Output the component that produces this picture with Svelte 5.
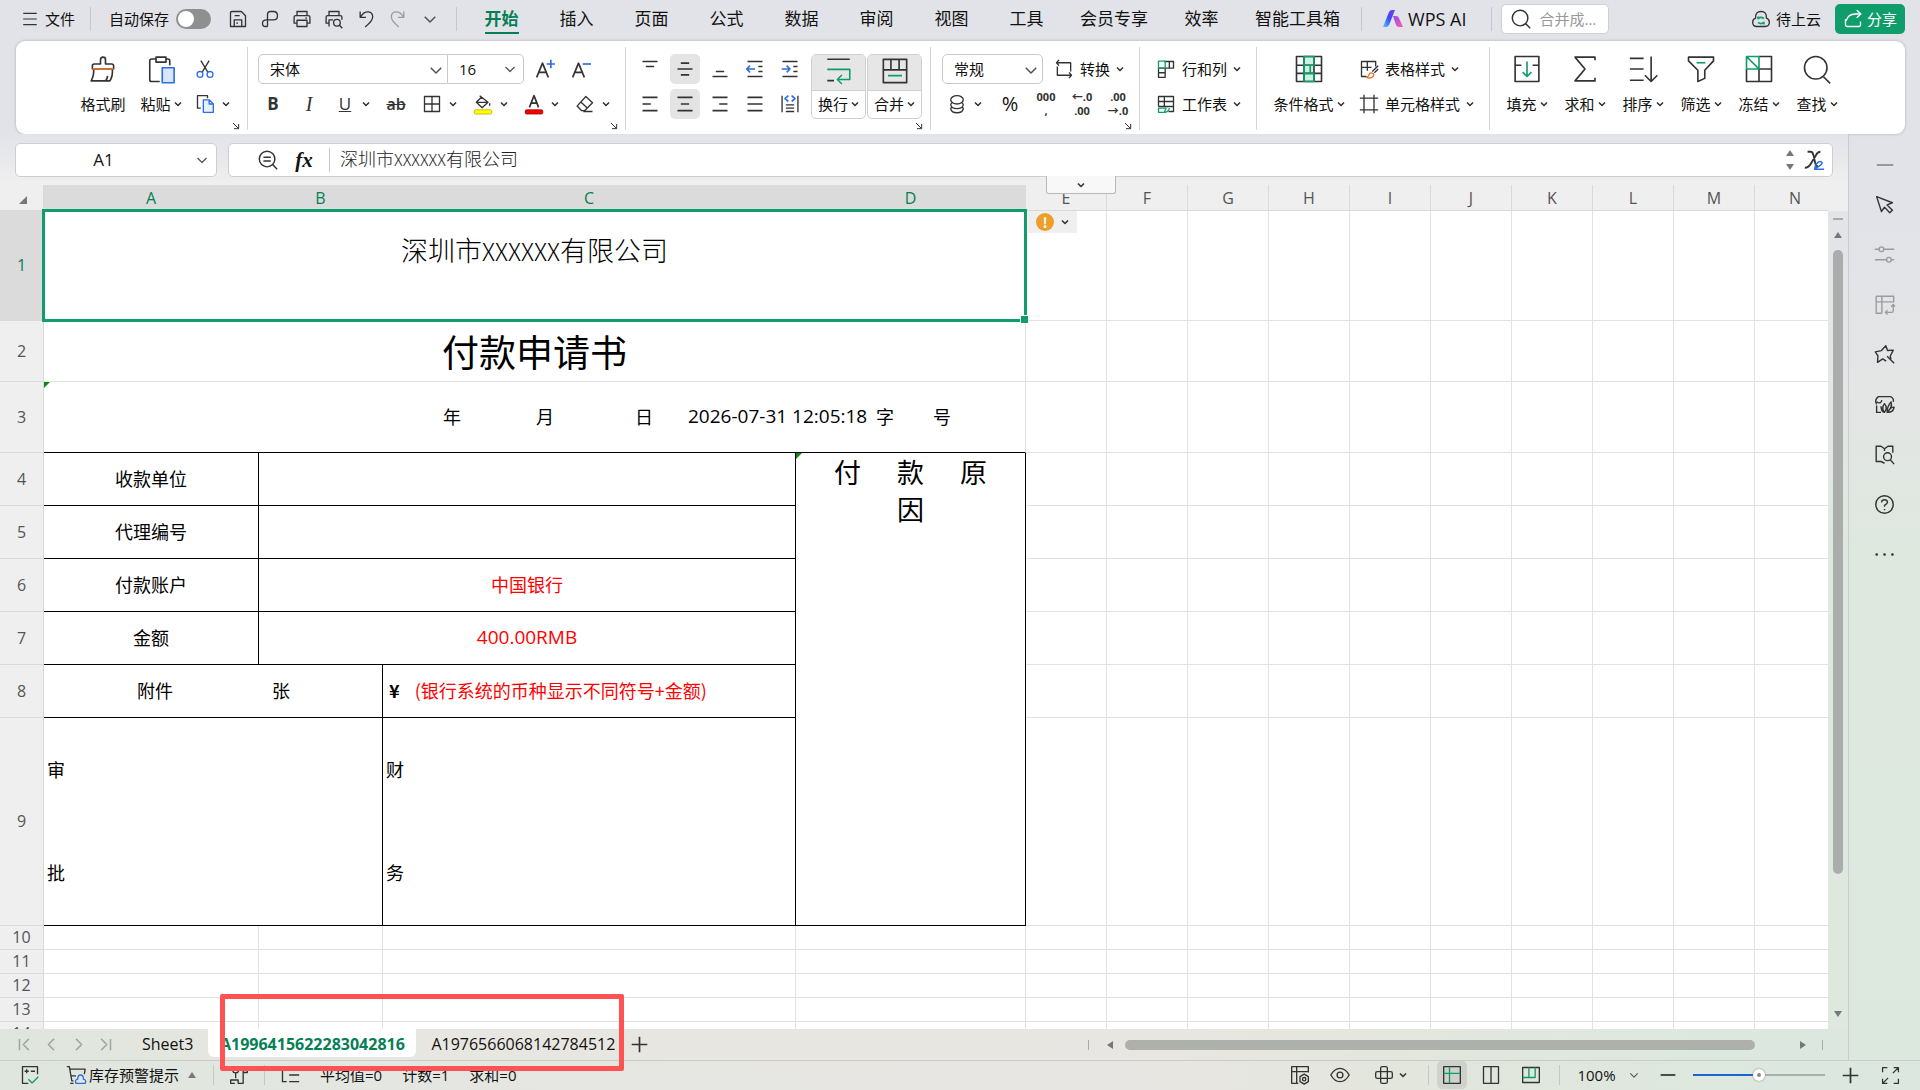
<script lang="ts">
	const icons: Record<string, string> = {
		menu: '<path d="M3 4.5h18M3 12h18M3 19.5h18"/>',
		save: '<path d="M3 4.5V21h18V8l-5-5H4.500Q3 3 3 4.500zM7.500 21v-8h9v8M8 8h6M10 17h2"/>',
		output: '<path d="M9 21V6.500Q9 3 12.500 3H16q5 0 5 5t-5 5H8q-5 0-5 4t3.500 4H9"/>',
		print: '<path d="M6 8V3h12v5M6 17H2.500V10Q2.500 8 4.500 8h15Q21.500 8 21.500 10v7H18M6 13.500h12V21H6zM16 11h2"/>',
		preview: '<path d="M6 8V3h12v5M6 17H2.500V10Q2.500 8 4.500 8h15Q21.500 8 21.500 10v3M6 21V13h5"/><circle cx="15.500" cy="16.500" r="4"/><path d="M18.500 19.500L22 23"/>',
		undo: '<path d="M5 3v7h7M5.500 9.500Q9 3.500 14 3.500q6 0 6 6 0 4.500-9 12"/>',
		redo: '<path d="M19 3v7h-7M18.500 9.500Q15 3.500 10 3.500q-6 0-6 6 0 4.500 9 12"/>',
		down: '<path stroke="#555" stroke-width="2.600" d="M3 8l9 9 9-9"/>',
		search: '<circle cx="11" cy="11" r="8.500"/><path d="M17 17l5 5"/>',
		cloud: '<path d="M7 21q-5 0-5-5 0-4 3.500-5Q5 3 12 3t6.500 8q3.500 1 3.500 5 0 5-5 5z"/><path stroke="#0f9d6b" stroke-width="2" d="M15.500 11.500q-3.500-3-7 0V9M8.500 16q3.500 3 7 0v2.500"/>',
		share: '<path d="M3 12v7q0 2 2 2h14q2 0 2-2v-4M4 14q2-8 11-8h6M16.500 1.500L21.500 6l-5 4.500"/>',
		brush: '<path d="M10 8V4.500q0-2 2-2t2 2V8h5q1.500 0 1.500 1.500V12h-17V9.500Q3.500 8 5 8zM4.500 12q.5 5-2 9.500h15q2.500-4 2-9.500M14 21.500q1.500-1.500 1.700-4"/><path stroke="#e5762b" d="M3.500 12h17"/>',
		paste: '<path d="M8 4H4.500Q3 4 3 5.500v15Q3 22 4.500 22H11M16 4h1.500Q19 4 19 5.500V9M8 2.500h8v4H8z"/><path stroke="#2b6fe0" fill="#d9e6fb" d="M13 11h9.500v12H13z"/>',
		cut: '<path d="M7 2l8.500 14M17 2L8.500 16"/><g stroke="#2b6fe0"><circle cx="6" cy="18.500" r="3.500"/><circle cx="18" cy="18.500" r="3.500"/></g>',
		copy: '<path d="M7 17H3V2h12v3"/><path stroke="#2b6fe0" fill="#e8f0fd" d="M10 7h7l5 5v10H10zM17 7v5h5"/>',
		grow: '<path stroke-width="2" d="M2 22L9 5l7 17M4.500 16h9"/><path stroke="#2b6fe0" stroke-width="2" d="M19 1v10M14 6h10"/>',
		shrink: '<path stroke-width="2" d="M2 22L9 5l7 17M4.500 16h9"/><path stroke="#2b6fe0" stroke-width="2" d="M14 6h10"/>',
		grid: '<path d="M3 3h18v18H3zM12 3v18M3 12h18"/>',
		bucket: '<path d="M8 2l10 8-7 6.500L4 10l6-6M4 10h14M20 11v3"/><rect x="1.500" y="19" width="21" height="5" rx="1.500" fill="#ffff00" stroke="#bcb500" stroke-width="1"/>',
		color: '<path stroke-width="2" d="M6.500 16L12 2l5.500 14M8.500 11h7"/><rect x="1.500" y="19" width="21" height="5" rx="1.500" fill="#f00000" stroke="#b00000" stroke-width="1"/>',
		eraser: '<path d="M13 3l8 7.500L11.500 20H8l-5.500-5.500zM7 9.500l8 7.500M10 21h11"/>',
		vtop: '<path stroke-width="2" d="M3 3h18M7 9h10"/>',
		vmid: '<path stroke-width="2" d="M7 5h10M3 12h18M7 19h10"/>',
		vbot: '<path stroke-width="2" d="M7 15h10M3 21h18"/>',
		outdent: '<path stroke-width="2" d="M3 3h18M16 9h5M16 15h5M3 21h18"/><path stroke="#2b6fe0" stroke-width="2" d="M2 12h10M6 8l-4 4 4 4"/>',
		indent: '<path stroke-width="2" d="M3 3h18M16 9h5M16 15h5M3 21h18"/><path stroke="#2b6fe0" stroke-width="2" d="M2 12h10M8 8l4 4-4 4"/>',
		left: '<path stroke-width="2" d="M3 4h18M3 12h10M3 20h18"/>',
		center: '<path stroke-width="2" d="M3 4h18M7 12h10M3 20h18"/>',
		right: '<path stroke-width="2" d="M3 4h18M11 12h10M3 20h18"/>',
		justify: '<path stroke-width="2" d="M3 4h18M3 12h18M3 20h18"/>',
		spread: '<path d="M2.500 2v20M21.500 2v20M7 13h10M7 17h10M7 21h10"/><path stroke="#2b6fe0" stroke-width="2" d="M10 2L6 5.500 10 9M14 2l4 3.500L14 9"/>',
		wrap: '<path d="M2 2h20M2 21h6"/><path stroke="#0f9d6b" d="M2 11h20v9H12M15 16l-4 4 4 4"/>',
		merge: '<path d="M2 2h20v20H2zM2 11h20M8.500 2v9M15.500 2v9"/><path stroke="#0f9d6b" d="M6 16h12"/>',
		convert: '<path d="M6 1L3 4.500 6 8M3 4.500h17V15M18 16l3 3.500L18 23M21 19.500H4V9"/>',
		coins: '<ellipse cx="12" cy="7" rx="7.500" ry="5"/><path d="M6 10.500q-1.500 1-1.500 2.500 1 4.500 7.500 4.500t7.500-4.500q0-1.500-1.500-2.500M6 15.500q-1.500 1-1.500 2.500 1 4.500 7.500 4.500t7.500-4.500q0-1.500-1.500-2.500"/>',
		rowcol: '<path d="M10 3h11v8H11v11H3V11M16 3v8M3 16.500h8M3 11h8"/><path stroke="#0f9d6b" d="M3 2.500h8v8.500H3z"/>',
		sheet: '<path d="M3 15V3h18v18h-6M3 9h18M10 3v12M3 15h18"/><path stroke="#0f9d6b" d="M3 17h9l-2 5H3zM10 22q5 0 6-5"/>',
		condition: '<path fill="#cdf1df" stroke="none" d="M8 2h8v20H8z"/><path d="M2 2h20v20H2zM2 9h20M2 15.500h20M8 2v20M16 2v20"/><path stroke="#0f9d6b" d="M8 2h8v7H8zM8 9h5v6.500H8zM8 15.500h8V22H8z"/>',
		tablestyle: '<path d="M9 21H3V3h17v6M3 10h12M10 3v11"/><path stroke="#e5762b" d="M9 22q3-1 3-3 1-3 4-2t1 4q-3 3-8 1z"/><path d="M16 15l7-7M18.500 16.500L23 12"/>',
		cellstyle: '<path d="M6 1v22M18 1v22M1 5h22M1 19h22"/>',
		fill: '<path d="M2.500 2h19v20h-19zM2.500 9h5M16.500 9h5"/><path stroke="#0f9d6b" d="M12 6v12M8.500 14.500L12 18l3.500-3.500"/>',
		sum: '<path d="M20 5V2.500H4L12 12l-8 9.500h16V19"/>',
		sort: '<path d="M1.500 3.500h11M1.500 12h11M1.500 21h11M18.500 2v20M13.500 17l5 5 5-5"/>',
		filter: '<path d="M2 2.500h20v3L15 13v6.500L9.500 22V13L2 5.500z"/><path stroke="#0f9d6b" d="M8.500 7h7"/>',
		freeze: '<path d="M12 2h10v20H2V12M12 12v10M12 12h10"/><path stroke="#0f9d6b" d="M2 2h10v10H2zM2 2l10 10"/>',
		find: '<circle cx="11" cy="11" r="9"/><path d="M17 18l5.500 5.500"/>',
		lens: '<circle cx="11" cy="11" r="8.500"/><path d="M17 17l5 5M7 9h8M7 13h8"/>',
		formula: '<path stroke-width="2" d="M5 3h3.500q2 0 3 4l2 9q1 3 3 3M19 3q-3 0-5 4L8 17q-2 3.500-6 3.500"/><path stroke="#2b6fe0" d="M13 21q0-4 4-7 3-1 4 1 0 2-7 6zM12 22h11"/>',
		cursor: '<path d="M3 3l5.500 17 3.500-5 6 6.500 3-3-6-6 6-2.500z"/>',
		sliders: '<path d="M1 6h5M11 6h12M1 18h13M20 18h3"/><circle cx="8.500" cy="6" r="2.700"/><circle cx="17" cy="18" r="2.700"/>',
		pivot: '<path d="M9 22H2.500V2.500h20V9H2.500M9 2.500V22M22 12v7q0 2-2 2h-7M19.500 14.500L22 12l2 2.500M15.500 18.500L13 21l2.500 2.500"/>',
		star: '<path d="M14 19.500L10 17l-6 4 .5-7.500L1.500 9l7-1.500L13.500 2l2 5.500L22 7l-3.500 7 1 3M15 14l8 8"/>',
		leaf: '<path d="M8 21H3v-8M3 12Q0 7 5 3h14q4 2 3 6M3 9q5 3 6-2M12 21q-4-5 0-10 4 5 0 10zM15 21q0-7 4.500-12 2 6-4.500 12zM16 21q2-6 7-6-1 6-7 6zM8 14q0 5 3 7"/>',
		book: '<path d="M8 20H2.500V2.500H8l4 3 4-3h5.500V10M12 5.500V8M8 20l4 2"/><circle cx="15.500" cy="14.500" r="4.500"/><path d="M18.500 18L23 23"/>',
		help: '<circle cx="12" cy="12" r="10"/><path d="M8.500 9.500Q9 6.500 12 6.500t3.500 2.700Q15.500 11 12 13v1.500M12 17v1.500"/>',
		more: '<path stroke-width="3" stroke-linecap="round" d="M3 12h.1M12 12h.1M21 12h.1"/>',
		minus: '<path stroke-width="2.600" d="M1 12h22"/>',
		plus: '<path stroke-width="2.400" d="M1 12h22M12 1v22"/>',
		first: '<path d="M4 3v18M19 3l-9 9 9 9"/>',
		prev: '<path d="M16 3l-9 9 9 9"/>',
		next: '<path d="M8 3l9 9-9 9"/>',
		last: '<path d="M20 3v18M5 3l9 9-9 9"/>',
		calc: '<path d="M10 22H3V2h18v9M5.500 7.500h5M8 5v5M13 7.500h5"/><path stroke="#0f9d6b" d="M10 17l4.500 4.500L22 14"/>',
		cart: '<path d="M1 2h3l3 17h2M5 5h18l-1 6M6 13h6M5 22h4"/><path stroke="#2b6fe0" d="M12 22q-2-4 2-5 0-5 3.500-5t3.500 5q4 1 2 5z"/>',
		macro: '<path d="M7 22H2v-4h9v4h6V9M8 16V9M22 3v6h-5V3zM22 3h-7"/><circle cx="8" cy="6" r="3.500"/>',
		tree: '<path d="M7 3H3v17h5M11 4h12M11 12h12M11 20h12"/>',
		gridgear: '<path d="M10 22H2V2h20v7M2 8h20M8 2v20"/><path d="M17 11l5 3v6l-5 3-5-3v-6z"/><circle cx="17" cy="17" r="2"/>',
		eye: '<path d="M1 12Q5.500 4 12 4t11 8q-4.500 8-11 8T1 12z"/><circle cx="12" cy="12" r="3.500"/>',
		cross: '<path d="M8 4q0-2 2-2h4q2 0 2 2v16q0 2-2 2h-4q-2 0-2-2zM4 8q-2 0-2 2v4q0 2 2 2h16q2 0 2-2v-4q0-2-2-2z"/>',
		normal: '<path d="M2 2h20v20H2z"/><path stroke="#0f9d6b" d="M9 2v20M2 10h20"/>',
		page: '<path d="M3 2h18v20H3zM12 2v20"/>',
		breaks: '<path d="M2 3h20v18H2z"/><path stroke="#0f9d6b" d="M2 15h15V3M9.500 3v12"/>',
		full: '<path d="M2 8V2h6M16 2h6v6M22 16v6h-6M8 22H2v-6M21 3l-6 6M3 21l6-6"/>',
		corner: '<path stroke-width="3" d="M3 3l16 16M20 6v14H6"/>'
	};

	const quick = ['save', 'output', 'print', 'preview', 'undo', 'redo', 'down'];
	const tabs = ['开始', '插入', '页面', '公式', '数据', '审阅', '视图', '工具', '会员专享', '效率', '智能工具箱'];
	const findTools = [
		['fill', '填充'],
		['sum', '求和'],
		['sort', '排序'],
		['filter', '筛选'],
		['freeze', '冻结'],
		['find', '查找']
	];
	const side = ['minus', 'cursor', 'sliders', 'pivot', 'star', 'leaf', 'book', 'help', 'more'];
	const columns = ['A', 'B', 'C', 'D', 'E', 'F', 'G', 'H', 'I', 'J', 'K', 'L', 'M', 'N'];
	const others = columns.slice(4);
	const formRows = [
		{ n: 5, label: '代理编号', value: '' },
		{ n: 6, label: '付款账户', value: '中国银行' },
		{ n: 7, label: '金额', value: '400.00RMB', latin: true }
	];

	let activeTab = $state('开始');
	let activeSheet = $state('A1996415622283042816');
	let autosave = $state(false);
	let zoom = $state(50);
</script>

{#snippet icon(name: string, size = 20)}
	<svg class="icon" width={size} height={size} viewBox="0 0 24 24" aria-hidden="true">{@html icons[name]}</svg>
{/snippet}

{#snippet chev()}
	<svg class="icon" width="8" height="8" viewBox="0 0 8 8" aria-hidden="true"><path d="M1 2.500L4 5.500l3-3" /></svg>
{/snippet}

{#snippet tool(name: string, label: string, drop = false)}
	<button class="tool" class:drop class:on={name === 'vmid' || name === 'center'} aria-label={label}>
		<span class="glyph">{@render icon(name)}</span>
		{#if drop}{@render chev()}{/if}
	</button>
{/snippet}

{#snippet big(name: string, label: string, drop = true)}
	<button class="big">
		{@render icon(name, 30)}
		<span class="label">{label}{#if drop}{@render chev()}{/if}</span>
	</button>
{/snippet}

{#snippet wide(name: string, label: string)}
	<button class="wide">{@render icon(name)}<span>{label}</span>{@render chev()}</button>
{/snippet}

{#snippet launcher()}
	<button class="launcher" aria-label="更多设置">{@render icon('corner', 8)}</button>
{/snippet}

{#snippet blanks(count: string[])}
	{#each count as c (c)}<td></td>{/each}
{/snippet}

<div class="app">
	<header class="topbar">
		<button class="file">{@render icon('menu', 18)}<span>文件</span></button>
		<i class="sep"></i>
		<label class="autosave">自动保存<input type="checkbox" bind:checked={autosave} /></label>
		<div class="quick">
			{#each quick as name}
				<button class:faded={name === 'redo'} aria-label={name}>{@render icon(name, name === 'down' ? 14 : 20)}</button>
			{/each}
		</div>
		<i class="sep"></i>
		<nav>
			{#each tabs as tab}
				<button class:active={activeTab === tab} onclick={() => (activeTab = tab)}><span>{tab}</span></button>
			{/each}
		</nav>
		<i class="sep"></i>
		<button class="ai">
			<svg width="20" height="18" viewBox="0 0 20 18" aria-hidden="true">
				<defs>
					<linearGradient id="ai-a" x1="0" y1="1" x2="1" y2="0"><stop offset="0" stop-color="#5ac8fa" /><stop offset=".5" stop-color="#3b4bf5" /><stop offset="1" stop-color="#7a3ff2" /></linearGradient>
					<linearGradient id="ai-b" x1="0" y1="0" x2="1" y2="1"><stop offset="0" stop-color="#8f4df5" /><stop offset="1" stop-color="#ff5aa8" /></linearGradient>
				</defs>
				<path fill="url(#ai-a)" d="M0 17L6 2q1-2 3-2h3L6 15q-1 2-3 2z" />
				<path fill="url(#ai-b)" d="M10 6h3q2 0 3 2l4 9h-4q-2 0-3-2z" />
			</svg>
			<span>WPS AI</span>
		</button>
		<i class="sep"></i>
		<label class="find">{@render icon('search', 22)}<input type="text" placeholder="合并成..." aria-label="搜索" /></label>
		<button class="sync">{@render icon('cloud')}<span>待上云</span></button>
		<button class="share">{@render icon('share')}<span>分享</span></button>
	</header>

	<section class="ribbon">
		<div class="group clip">
			{@render big('brush', '格式刷', false)}
			{@render big('paste', '粘贴')}
			<div class="stack">
				<div class="row">{@render tool('cut', '剪切')}</div>
				<div class="row">{@render tool('copy', '复制', true)}</div>
			</div>
			{@render launcher()}
		</div>
		<div class="group font">
			<div class="stack">
				<div class="row">
					<div class="pair">
						<label class="combo family"><select aria-label="字体"><option>宋体</option></select>{@render icon('down', 14)}</label>
						<label class="combo size"><select aria-label="字号"><option>16</option></select>{@render icon('down', 12)}</label>
					</div>
					{@render tool('grow', '增大字号')}
					{@render tool('shrink', '减小字号')}
				</div>
				<div class="row">
					<button class="tool"><b>B</b></button>
					<button class="tool"><em>I</em></button>
					<button class="tool drop"><span class="glyph"><u>U</u></span>{@render chev()}</button>
					<button class="tool"><s>ab</s></button>
					{@render tool('grid', '边框', true)}
					{@render tool('bucket', '填充颜色', true)}
					{@render tool('color', '字体颜色', true)}
					{@render tool('eraser', '清除', true)}
				</div>
			</div>
			{@render launcher()}
		</div>
		<div class="group align">
			<div class="stack">
				<div class="row">
					{#each ['vtop', 'vmid', 'vbot', 'outdent', 'indent'] as name}{@render tool(name, name)}{/each}
				</div>
				<div class="row">
					{#each ['left', 'center', 'right', 'justify', 'spread'] as name}{@render tool(name, name)}{/each}
				</div>
			</div>
			<div class="splits">
				<button class="split"><span class="face">{@render icon('wrap', 27)}</span><span class="label">换行{@render chev()}</span></button>
				<button class="split"><span class="face">{@render icon('merge', 28)}</span><span class="label">合并{@render chev()}</span></button>
			</div>
			{@render launcher()}
		</div>
		<div class="group number">
			<div class="stack">
				<div class="row">
					<label class="combo format"><select aria-label="数字格式"><option>常规</option></select>{@render icon('down', 14)}</label>
					{@render wide('convert', '转换')}
				</div>
				<div class="row">
					{@render tool('coins', '货币', true)}
					<button class="tool percent">%</button>
					<button class="tool digits"><span>000</span><span>,</span></button>
					<button class="tool digits"><span>←.0</span><span>.00</span></button>
					<button class="tool digits"><span>.00</span><span>→.0</span></button>
				</div>
			</div>
			{@render launcher()}
		</div>
		<div class="group cells">
			<div class="stack">
				{@render wide('rowcol', '行和列')}
				{@render wide('sheet', '工作表')}
			</div>
		</div>
		<div class="group styles">
			{@render big('condition', '条件格式')}
			<div class="stack">
				{@render wide('tablestyle', '表格样式')}
				{@render wide('cellstyle', '单元格样式')}
			</div>
		</div>
		<div class="group edit">
			{#each findTools as [name, label]}{@render big(name, label)}{/each}
		</div>
	</section>

	<main>
		<div class="work">
			<div class="formula-row">
				<label class="namebox"><input type="text" value="A1" aria-label="名称框" />{@render icon('down', 12)}</label>
				<div class="formula">
					<button aria-label="缩放">{@render icon('lens', 22)}</button>
					<button class="fx">fx</button>
					<i class="sep"></i>
					<div class="content" role="textbox" tabindex="0" aria-label="编辑栏">深圳市<span class="half">XXXXXX</span>有限公司</div>
					<span class="spin"><i class="tri up"></i><i class="tri dn"></i></span>
					<button aria-label="公式">{@render icon('formula', 22)}</button>
				</div>
				<button class="pull" aria-label="展开编辑栏">{@render chev()}</button>
			</div>

			<div class="sheet">
				<div class="grid-wrap">
					<table>
						<colgroup>
							<col class="c-head" /><col class="c-a" /><col class="c-b" /><col class="c-c" /><col class="c-d" />
							{#each others as c (c)}<col class="c-rest" />{/each}
						</colgroup>
						<thead>
							<tr>
								<th class="all"><i></i></th>
								{#each columns as c, i (c)}<th class:sel={i < 4}>{c}</th>{/each}
							</tr>
						</thead>
						<tbody>
							<tr class="r1">
								<th class="sel">1</th>
								<td colspan="4" class="selected">
									<div class="company">深圳市<span class="half">XXXXXX</span>有限公司</div>
								</td>
								<td><button class="warn" aria-label="错误提示"><b>!</b>{@render chev()}</button></td>
								{@render blanks(others.slice(1))}
							</tr>
							<tr class="r2">
								<th>2</th>
								<td colspan="4" class="title">付款申请书</td>
								{@render blanks(others)}
							</tr>
							<tr class="r3">
								<th>3</th>
								<td colspan="4" class="flag line">
									<div class="date"><span>年</span><span>月</span><span>日</span><span class="latin">2026-07-31 12:05:18</span><span>字</span><span>号</span></div>
								</td>
								{@render blanks(others)}
							</tr>
							<tr class="form">
								<th>4</th>
								<td class="box">收款单位</td>
								<td class="box" colspan="2"></td>
								<td class="box flag reason" rowspan="6">
									<div class="spread"><span>付</span><span>款</span><span>原</span></div>
									<div>因</div>
								</td>
								{@render blanks(others)}
							</tr>
							{#each formRows as row (row.n)}
								<tr class="form">
									<th>{row.n}</th>
									<td class="box">{row.label}</td>
									<td class="box red" class:latin={row.latin} colspan="2">{row.value}</td>
									{@render blanks(others)}
								</tr>
							{/each}
							<tr class="form">
								<th>8</th>
								<td class="box" colspan="2"><div class="attach"><span>附件</span><span>张</span></div></td>
								<td class="box"><div class="amount"><b>¥</b><span class="red">(银行系统的币种显示不同符号+金额)</span></div></td>
								{@render blanks(others)}
							</tr>
							<tr class="r9">
								<th>9</th>
								<td class="box" colspan="2"><div class="vertical"><span>审</span><span>批</span></div></td>
								<td class="box"><div class="vertical"><span>财</span><span>务</span></div></td>
								{@render blanks(others)}
							</tr>
							{#each [10, 11, 12, 13, 14] as n (n)}
								<tr class="blank">
									<th>{n}</th>
									{@render blanks(columns)}
								</tr>
							{/each}
						</tbody>
					</table>
				</div>
				<div class="vscroll">
					<i class="dash"></i>
					<i class="tri up"></i>
					<div class="track"><i class="thumb"></i></div>
					<i class="tri dn"></i>
				</div>
			</div>

			<div class="sheetbar">
				<div class="pager">
					{#each ['first', 'prev', 'next', 'last'] as name}<button aria-label={name}>{@render icon(name, 15)}</button>{/each}
				</div>
				{#each ['Sheet3', 'A1996415622283042816', 'A1976566068142784512'] as name}
					<button class="sheet-tab" class:active={activeSheet === name} onclick={() => (activeSheet = name)}>{name}</button>
				{/each}
				<button class="add" aria-label="新建工作表">{@render icon('plus', 17)}</button>
				<div class="hscroll">
					<i class="sep"></i>
					<i class="tri lt"></i>
					<div class="track"><i class="thumb"></i></div>
					<i class="tri rt"></i>
					<i class="sep"></i>
				</div>
				<div class="marker"></div>
			</div>
		</div>

		<aside>
			{#each side as name}
				<button class:faded={name === 'sliders' || name === 'pivot'} aria-label={name}>{@render icon(name, name === 'minus' ? 18 : 21)}</button>
			{/each}
		</aside>
	</main>

	<footer>
		<button class="calc" aria-label="计算">{@render icon('calc')}</button>
		<button class="stock">{@render icon('cart')}<span>库存预警提示</span><i class="tri up"></i></button>
		<i class="sep"></i>
		<button class="mid" aria-label="宏">{@render icon('macro')}</button>
		<i class="sep"></i>
		<button class="mid" aria-label="大纲">{@render icon('tree')}</button>
		<div class="stats"><span>平均值=0</span><span>计数=1</span><span>求和=0</span></div>
		<div class="views">
			<button aria-label="设置">{@render icon('gridgear')}</button>
			<button aria-label="护眼">{@render icon('eye')}</button>
			<button class="drop" aria-label="阅读">{@render icon('cross')}{@render chev()}</button>
			<i class="sep"></i>
			<button class="on" aria-label="普通视图">{@render icon('normal')}</button>
			<button aria-label="页面布局">{@render icon('page')}</button>
			<button aria-label="分页预览">{@render icon('breaks')}</button>
			<i class="sep"></i>
			<button class="scale">100%{@render icon('down', 10)}</button>
			<button aria-label="缩小">{@render icon('minus', 16)}</button>
			<input type="range" min="0" max="100" bind:value={zoom} aria-label="缩放比例" />
			<button aria-label="放大">{@render icon('plus', 17)}</button>
			<button aria-label="全屏">{@render icon('full', 19)}</button>
		</div>
	</footer>
</div>

<style>
	:global(body) {
		margin: 0;
		background: #e2e3e8;
	}

	.app {
		display: flex;
		flex-direction: column;
		height: 100vh;
		overflow: hidden;
		font-family: 'Open Sans', 'Noto Sans CJK SC', sans-serif;
		font-size: 15px;
		line-height: 20px;
		color: #111;
		background: linear-gradient(#e2e3e8 0, #e2e3e8 200px, #e4e5e5 390px, #dee8df 560px, #dce8df 100%);
	}

	.app * {
		box-sizing: border-box;
	}

	button,
	input,
	select {
		font: inherit;
		color: inherit;
		background: none;
		border: 0;
		padding: 0;
		margin: 0;
		outline: none;
	}

	button {
		display: flex;
		align-items: center;
		justify-content: center;
		white-space: nowrap;
		cursor: pointer;
	}

	.icon {
		flex: none;
		fill: none;
		stroke: #333;
		stroke-width: 1.6;
		stroke-linejoin: round;
		overflow: visible;
	}

	.faded {
		opacity: 0.4;
	}

	.sep {
		flex: none;
		width: 1px;
		height: 24px;
		background: #c6c7cb;
	}

	.tri {
		flex: none;
		width: 0;
		height: 0;
		border: 4px solid transparent;
	}

	.tri.up {
		border-top: 0;
		border-bottom: 6px solid #777;
	}

	.tri.dn {
		border-bottom: 0;
		border-top: 6px solid #777;
	}

	.tri.lt {
		border-left: 0;
		border-right: 6px solid #777;
	}

	.tri.rt {
		border-right: 0;
		border-left: 6px solid #777;
	}

	/* top bar */
	.topbar {
		flex: none;
		display: flex;
		align-items: center;
		height: 41px;
		padding: 0 15px 4px 21px;
	}

	.file {
		gap: 6px;
	}

	.file + .sep {
		margin: 0 18px 0 15px;
	}

	.autosave {
		display: flex;
		align-items: center;
		gap: 7px;
		margin-right: 11px;
	}

	.autosave input {
		appearance: none;
		display: flex;
		width: 35px;
		height: 20px;
		padding: 2px;
		border-radius: 10px;
		background: #8f8f8f;
	}

	.autosave input::before {
		content: '';
		width: 16px;
		height: 16px;
		border-radius: 8px;
		background: #fff;
	}

	.autosave input:checked {
		justify-content: flex-end;
		background: #0f9d6b;
	}

	.quick {
		display: flex;
	}

	.quick button {
		width: 32px;
		height: 30px;
	}

	.quick + .sep {
		margin: 0 7px 0 10px;
	}

	nav {
		display: flex;
	}

	nav button {
		min-width: 75px;
		padding: 0 16px;
		font-size: 17px;
	}

	nav span {
		padding: 6px 0 3px;
		line-height: 20px;
		border-bottom: 2px solid transparent;
	}

	nav .active span {
		font-weight: 700;
		color: #067f56;
		border-color: #067f56;
	}

	nav + .sep {
		margin: 0 21px 0 5px;
	}

	.ai {
		gap: 5px;
		font-size: 18px;
	}

	.ai + .sep {
		margin: 0 9px 0 25px;
	}

	.find {
		display: flex;
		align-items: center;
		gap: 7px;
		width: 108px;
		height: 30px;
		padding: 0 8px;
		border: 1px solid #cfd0d4;
		border-radius: 5px;
		background: #fff;
	}

	.find input {
		min-width: 0;
		flex: 1;
	}

	.find input::placeholder {
		color: #999;
		opacity: 1;
	}

	.sync {
		gap: 5px;
		margin-left: auto;
	}

	.share {
		gap: 4px;
		width: 70px;
		height: 30px;
		margin-left: 14px;
		border-radius: 5px;
		color: #fff;
		background: #0f9d6b;
	}

	.share .icon {
		stroke: #fff;
	}

	/* ribbon */
	.ribbon {
		flex: none;
		display: flex;
		height: 93px;
		margin: 0 15px 0 16px;
		padding-top: 6px;
		border-radius: 9px;
		background: #fff;
		box-shadow: 0 0 3px #a9abb2;
	}

	.group {
		position: relative;
		display: flex;
		height: 83px;
		padding-top: 7px;
		border-right: 1px solid #d5d5d5;
	}

	.group:last-child {
		border-right: 0;
		padding-left: 8px;
	}

	.clip {
		width: 232px;
		padding-left: 58px;
	}

	.font {
		width: 378px;
		padding-left: 10px;
	}

	.align {
		gap: 6px;
		width: 305px;
		padding-left: 9px;
	}

	.number {
		width: 209px;
		padding-left: 11px;
	}

	.cells {
		width: 117px;
		padding-left: 11px;
	}

	.styles {
		gap: 2px;
		width: 233px;
		padding-left: 9px;
	}

	.stack {
		display: flex;
		flex-direction: column;
		gap: 5px;
	}

	.row {
		display: flex;
		gap: 6px;
		height: 30px;
	}

	.align .row {
		gap: 5px;
	}

	.tool {
		flex: none;
		width: 30px;
		height: 30px;
		border-radius: 5px;
		font-size: 17px;
	}

	.tool.drop {
		width: 45px;
		justify-content: flex-start;
	}

	.number .tool.drop {
		width: 47px;
	}

	.tool.on {
		background: #e4e4e4;
	}

	.glyph {
		display: flex;
		justify-content: center;
		width: 30px;
		margin-right: 2px;
	}

	.tool:not(.drop) .glyph {
		margin: 0;
	}

	.tool b,
	.tool em,
	.tool u,
	.tool s {
		color: #333;
	}

	.tool em {
		font-family: 'Liberation Serif', serif;
		font-size: 20px;
	}

	.tool s {
		font-size: 16px;
		font-weight: 600;
	}

	.tool.percent {
		font-size: 20px;
	}

	.tool.digits {
		flex-direction: column;
		font-size: 11px;
		font-weight: 700;
		line-height: 14px;
		color: #333;
	}

	.big {
		flex-direction: column;
		justify-content: flex-start;
		gap: 10px;
		min-width: 58px;
		height: 65px;
	}

	.styles .big {
		min-width: 86px;
	}

	.big .icon {
		stroke-width: 1.3;
	}

	.label {
		display: flex;
		align-items: center;
		gap: 3px;
	}

	.label .icon {
		stroke-width: 1.6;
	}

	.wide {
		gap: 6px;
		height: 30px;
		padding: 0 5px;
		justify-content: flex-start;
	}

	.launcher {
		position: absolute;
		right: 7px;
		bottom: 0;
	}

	.pair {
		display: flex;
	}

	.combo {
		position: relative;
		display: flex;
		height: 30px;
		border: 1px solid #c9c9c9;
		border-radius: 5px;
		background: #fff;
	}

	.combo select {
		appearance: none;
		width: 100%;
		padding: 0 11px;
	}

	.combo .icon {
		position: absolute;
		right: 4px;
		top: 8px;
		pointer-events: none;
	}

	.family {
		width: 190px;
		border-radius: 5px 0 0 5px;
	}

	.size {
		width: 76px;
		border-left: 0;
		border-radius: 0 5px 5px 0;
	}

	.size .icon {
		right: 7px;
	}

	.format {
		width: 101px;
	}

	.splits {
		display: flex;
		gap: 1px;
	}

	.split {
		flex-direction: column;
		width: 55px;
		height: 65px;
		border: 1px solid #d0d0d0;
		border-radius: 5px;
		overflow: hidden;
	}

	.face {
		flex: none;
		display: flex;
		align-items: center;
		justify-content: center;
		width: 100%;
		height: 36px;
		padding-bottom: 4px;
		border-bottom: 1px solid #d0d0d0;
		background: #e6e6e6;
	}

	.face .icon {
		stroke-width: 1.4;
	}

	.split .label {
		flex: 1;
		padding-bottom: 2px;
	}

	/* formula bar */
	main {
		flex: 1;
		display: flex;
		min-height: 0;
	}

	.work {
		flex: 1;
		display: flex;
		flex-direction: column;
		min-width: 0;
		border-right: 1px solid #c9cbce;
		background: linear-gradient(#e2e3e8, #efefef 50px);
	}

	.formula-row {
		position: relative;
		flex: none;
		display: flex;
		gap: 11px;
		padding: 9px 15px 8px;
	}

	.namebox,
	.formula {
		display: flex;
		align-items: center;
		height: 34px;
		border: 1px solid #cdced2;
		border-radius: 5px;
		background: #fff;
	}

	.namebox {
		width: 202px;
		padding-right: 8px;
	}

	.namebox input {
		flex: 1;
		min-width: 0;
		padding-right: 5px;
		font-size: 17px;
		text-align: center;
	}

	.formula {
		flex: 1;
		padding-left: 21px;
	}

	.formula button {
		width: 36px;
	}

	.formula .sep {
		margin: 0 10px 0 7px;
	}

	.formula .fx {
		font-family: 'Liberation Serif', serif;
		font-size: 21px;
		font-style: italic;
		font-weight: 700;
	}

	.content {
		flex: 1;
		padding-bottom: 4px;
		font-family: 'Noto Sans CJK SC', sans-serif;
		font-size: 18px;
		font-weight: 300;
		color: #222;
	}

	.half {
		font-size: 16px;
	}

	.company .half {
		font-size: 24px;
	}

	.spin {
		display: flex;
		flex-direction: column;
		gap: 8px;
		margin-right: 2px;
	}

	.pull {
		position: absolute;
		left: 1046px;
		top: 42px;
		z-index: 3;
		width: 70px;
		height: 18px;
		border: 1px solid #b9b9b9;
		border-top: 0;
		border-radius: 0 0 3px 3px;
		background: #f8f8f8;
	}

	/* sheet */
	.sheet {
		flex: 1;
		display: flex;
		min-height: 0;
	}

	.grid-wrap {
		flex: 1;
		min-width: 0;
		overflow: hidden;
	}

	table {
		table-layout: fixed;
		width: 1836px;
		border-collapse: separate;
		border-spacing: 0;
	}

	.c-head {
		width: 44px;
	}

	.c-a {
		width: 215px;
	}

	.c-b {
		width: 124px;
	}

	.c-c {
		width: 413px;
	}

	.c-d {
		width: 230px;
	}

	.c-rest {
		width: 81px;
	}

	th {
		padding: 0 0 1px;
		font-size: 16px;
		font-weight: 400;
		color: #555;
		background: #efefef;
		border: 0 solid #d9d9d9;
		border-width: 0 1px 1px 0;
	}

	th.sel {
		color: #067f56;
		background: #dbdbdb;
	}

	thead th {
		height: 26px;
		padding: 0;
	}

	thead .sel {
		border-color: #dbdbdb;
	}

	.all i {
		display: block;
		margin: 4px 0 0 19px;
		width: 0;
		height: 0;
		border: 4px solid transparent;
		border-right-color: #777;
		border-bottom-color: #777;
	}

	td {
		position: relative;
		padding: 0 0 2px;
		font-family: 'Noto Sans CJK SC', sans-serif;
		font-size: 18px;
		line-height: 24px;
		text-align: center;
		color: #000;
		background: #fff;
		border: 0 solid #e2e2e2;
		border-width: 0 1px 1px 0;
	}

	.r1 {
		height: 110px;
	}

	.r2 {
		height: 61px;
	}

	.r3 {
		height: 71px;
	}

	.form {
		height: 53px;
	}

	.r9 {
		height: 208px;
	}

	.blank {
		height: 24px;
	}

	.blank th {
		line-height: 20px;
	}

	.blank td {
		padding: 0;
	}

	.selected::before {
		content: '';
		position: absolute;
		inset: -2px;
		z-index: 1;
		border: 3px solid #0f9d6b;
	}

	.selected::after {
		content: '';
		position: absolute;
		right: -4px;
		bottom: -4px;
		z-index: 2;
		width: 7px;
		height: 7px;
		border: 1px solid #fff;
		background: #0f9d6b;
	}

	.company {
		padding-bottom: 28px;
		font-size: 27px;
		font-weight: 300;
		line-height: 36px;
	}

	.title {
		padding: 0;
		font-size: 37px;
		line-height: 48px;
	}

	.line {
		border-bottom-color: #000;
	}

	.box {
		border-color: #000;
	}

	.red {
		color: #f00;
	}

	.flag::before {
		content: '';
		position: absolute;
		left: 0;
		top: 0;
		border: 3px solid transparent;
		border-top-color: #0a8a0a;
		border-left-color: #0a8a0a;
	}

	.date {
		display: grid;
		grid-template-columns: 93px 99px 53px 188px 57px auto;
		padding-left: 399px;
		text-align: left;
	}

	.latin {
		font-family: 'Open Sans', sans-serif;
		font-size: 19px;
		white-space: nowrap;
	}

	.reason {
		vertical-align: top;
		font-size: 27px;
		line-height: 37px;
	}

	.spread {
		display: flex;
		justify-content: center;
		gap: 36px;
	}

	.attach {
		display: flex;
		gap: 99px;
		padding-left: 93px;
	}

	.amount {
		display: flex;
		gap: 15px;
		padding-left: 6px;
		white-space: nowrap;
	}

	.vertical {
		display: flex;
		flex-direction: column;
		justify-content: space-around;
		height: 205px;
		padding-left: 3px;
		text-align: left;
	}

	.warn {
		position: absolute;
		left: 2px;
		top: 0;
		gap: 7px;
		width: 49px;
		height: 22px;
		background: #efefef;
	}

	.warn b {
		width: 18px;
		height: 18px;
		border-radius: 9px;
		font-size: 14px;
		line-height: 18px;
		color: #fff;
		background: #eb9f28;
	}

	.vscroll {
		flex: none;
		display: flex;
		flex-direction: column;
		align-items: center;
		width: 20px;
		margin-top: 26px;
		padding: 7px 0 12px;
		background: linear-gradient(#e3e4e8, #e4e5e5 180px, #dee8df 350px);
	}

	.dash {
		width: 10px;
		height: 2px;
		margin-bottom: 12px;
		background: #aaa;
	}

	.vscroll .track {
		flex: 1;
		width: 10px;
		padding-top: 12px;
	}

	.vscroll .thumb {
		display: block;
		height: 82%;
		border-radius: 5px;
		background: #aaadab;
	}

	/* sheet tabs */
	.sheetbar {
		position: relative;
		flex: none;
		display: flex;
		align-items: center;
		height: 31px;
		font-size: 16px;
		background: linear-gradient(90deg, #dfe6de, #e8e6e0 20%, #e8e6e2 60%, #e5e6dd 72%, #dce8df 92%);
	}

	.pager {
		display: flex;
		padding-left: 11px;
	}

	.pager button {
		width: 27px;
	}

	.pager .icon {
		stroke: #a3a5a2;
		stroke-width: 2.4;
	}

	.sheet-tab {
		align-self: flex-start;
		height: 28px;
		padding: 2px 15px 0;
	}

	.pager + .sheet-tab {
		padding-left: 23px;
	}

	.sheet-tab.active {
		width: 208px;
		border-radius: 0 0 6px 6px;
		font-weight: 700;
		color: #067f56;
		background: #fff;
	}

	.add {
		margin-left: 1px;
	}

	.hscroll {
		display: flex;
		align-items: center;
		width: 735px;
		margin: 0 25px 0 auto;
	}

	.hscroll .sep {
		height: 10px;
		background: #aaa;
	}

	.hscroll .lt {
		margin: 0 12px 0 18px;
	}

	.hscroll .rt {
		margin: 0 16px 0 12px;
	}

	.hscroll .track {
		flex: 1;
	}

	.hscroll .thumb {
		display: block;
		width: 95%;
		height: 10px;
		border-radius: 5px;
		background: #adb0ab;
	}

	.marker {
		position: absolute;
		left: 220px;
		top: -35px;
		z-index: 4;
		width: 404px;
		height: 77px;
		border: 5px solid #ff5252;
		border-radius: 2px;
		pointer-events: none;
	}

	/* side panel */
	aside {
		flex: none;
		display: flex;
		flex-direction: column;
		width: 71px;
		padding-top: 17px;
	}

	aside button {
		height: 50px;
	}

	aside button:first-child {
		height: 28px;
	}

	aside button:first-child .icon {
		stroke: #999;
	}

	/* status bar */
	footer {
		flex: none;
		display: flex;
		align-items: center;
		height: 30px;
		padding-bottom: 1px;
		border-top: 1px solid #c9cbc8;
		background: linear-gradient(90deg, #dfe6de, #e5e6e2 25%, #e8e6e2 60%, #e2e6dc 75%, #dce8df 92%);
	}

	footer .sep {
		height: 20px;
	}

	.calc {
		width: 60px;
	}

	.stock {
		gap: 3px;
		padding-left: 6px;
		margin-right: 17px;
	}

	.stock .tri {
		margin-left: 6px;
	}

	.mid {
		width: 50px;
	}

	.stats {
		display: flex;
		gap: 20px;
		padding-left: 5px;
	}

	.views {
		display: flex;
		align-items: center;
		margin-left: auto;
		padding-right: 10px;
	}

	.views button {
		width: 40px;
		height: 28px;
	}

	.views .drop {
		gap: 5px;
		width: 60px;
	}

	.views .sep {
		margin: 0 8px;
	}

	.views .on {
		width: 30px;
		margin-right: 4px;
		border-radius: 5px;
		background: #cfd1cc;
	}

	.views .scale {
		gap: 13px;
		width: 80px;
	}

	.views input {
		appearance: none;
		width: 132px;
		height: 14px;
		margin: 0 5px;
		background: linear-gradient(90deg, #1e62d0 50%, #a9b0ab 50%) center / 100% 2px no-repeat;
	}

	.views input::-webkit-slider-thumb {
		appearance: none;
		width: 12px;
		height: 12px;
		border: 4px solid #fff;
		border-radius: 6px;
		background: #888;
		box-shadow: 0 0 2px #777;
	}
</style>
